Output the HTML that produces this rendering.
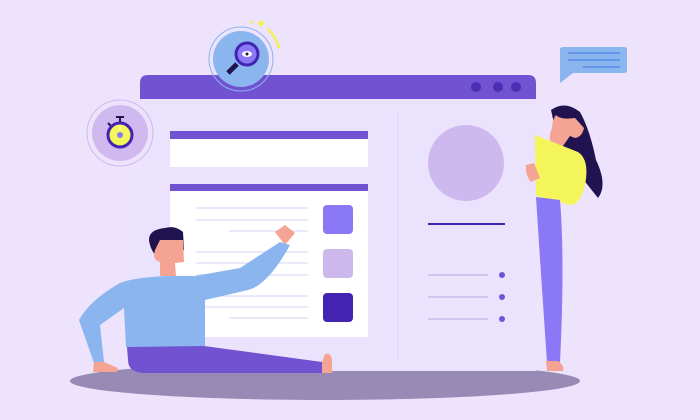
<!DOCTYPE html>
<html><head><style>html,body{margin:0;padding:0;background:#ede3fd;}svg{display:block}</style></head>
<body>
<svg width="700" height="420" viewBox="0 0 700 420" xmlns="http://www.w3.org/2000/svg">
<rect width="700" height="420" fill="#ede3fd"/>
<!-- shadow -->
<ellipse cx="325" cy="381" rx="255" ry="19" fill="#978bb5"/>
<!-- window -->
<rect x="140" y="99" width="396" height="272" fill="#ebe2fd"/>
<path d="M148 75 H528 Q536 75 536 83 V99 H140 V83 Q140 75 148 75Z" fill="#7152d0"/>
<circle cx="476" cy="87" r="5" fill="#4a2fb5"/><circle cx="498" cy="87" r="5" fill="#4a2fb5"/><circle cx="516" cy="87" r="5" fill="#4a2fb5"/>
<rect x="170" y="131" width="198" height="8" fill="#7152d0"/>
<rect x="170" y="139" width="198" height="28" fill="#fff"/>
<rect x="170" y="184" width="198" height="7" fill="#7152d0"/>
<rect x="170" y="191" width="198" height="146" fill="#fff"/>
<g stroke="#e6e0fa" stroke-width="1.5">
<line x1="196" y1="208" x2="308" y2="208"/><line x1="196" y1="220" x2="308" y2="220"/><line x1="229" y1="231" x2="308" y2="231"/>
<line x1="196" y1="252" x2="308" y2="252"/><line x1="196" y1="263" x2="308" y2="263"/><line x1="196" y1="275" x2="308" y2="275"/>
<line x1="196" y1="296" x2="308" y2="296"/><line x1="196" y1="307" x2="308" y2="307"/><line x1="229" y1="318" x2="308" y2="318"/>
</g>
<rect x="323" y="205" width="30" height="29" rx="4" fill="#8b78f6"/>
<rect x="323" y="249" width="30" height="29" rx="4" fill="#cdb8ec"/>
<rect x="323" y="293" width="30" height="29" rx="4" fill="#4324b2"/>
<line x1="398" y1="112" x2="398" y2="360" stroke="#ddd2f7" stroke-width="1"/>
<circle cx="466" cy="163" r="38" fill="#ceb9ee"/>
<line x1="428" y1="224" x2="505" y2="224" stroke="#4324b2" stroke-width="2"/>
<g stroke="#cdb8ec" stroke-width="1.5"><line x1="428" y1="275" x2="488" y2="275"/><line x1="428" y1="297" x2="488" y2="297"/><line x1="428" y1="319" x2="488" y2="319"/></g>
<g fill="#7152d0"><circle cx="502" cy="275" r="3"/><circle cx="502" cy="297" r="3"/><circle cx="502" cy="319" r="3"/></g>
<!-- magnifier badge -->
<circle cx="241" cy="59" r="32" fill="none" stroke="#8ab5ef" stroke-width="1"/>
<circle cx="241" cy="59" r="28" fill="#8ab5ef"/>
<path d="M268 29 Q276 37 279 48" stroke="#f3f05a" stroke-width="2.5" fill="none"/>
<path d="M261 19 l1.5 3 3 1.5 -3 1.5 -1.5 3 -1.5 -3 -3 -1.5 3 -1.5z" fill="#f3f05a"/>
<circle cx="252" cy="22" r="1.5" fill="#f3f05a"/>
<line x1="237" y1="64" x2="228" y2="73" stroke="#20134f" stroke-width="5"/>
<circle cx="247" cy="54" r="11" fill="#8b78f6" stroke="#4324b2" stroke-width="3"/>
<ellipse cx="247" cy="54" rx="5" ry="3" fill="#fff"/><circle cx="247" cy="54" r="1.5" fill="#20134f"/>
<!-- stopwatch -->
<circle cx="120" cy="133" r="33" fill="none" stroke="#cfb9ee" stroke-width="1"/>
<circle cx="120" cy="133" r="28" fill="#cfb9ee"/>
<rect x="116" y="116" width="8" height="2" fill="#20134f"/><rect x="119" y="117" width="2" height="5" fill="#20134f"/>
<line x1="108" y1="123" x2="112" y2="127" stroke="#20134f" stroke-width="2"/>
<circle cx="120" cy="135" r="12" fill="#f3f75a" stroke="#4324b2" stroke-width="3"/>
<circle cx="120" cy="135" r="3" fill="#8b78f6"/><line x1="120" y1="126" x2="120" y2="131" stroke="#fff" stroke-width="1"/>
<!-- speech bubble -->
<path d="M563 47 H624 Q627 47 627 50 V70 Q627 73 624 73 H573 L560 83 V50 Q560 47 563 47Z" fill="#8ab5ef"/>
<g stroke="#4a85e0" stroke-width="1.3"><line x1="568" y1="53" x2="620" y2="53"/><line x1="568" y1="60" x2="620" y2="60"/><line x1="583" y1="67" x2="620" y2="67"/></g>
<!-- woman -->
<path d="M551 110 Q565 100 580 112 Q590 130 596 160 Q608 185 598 198 L560 150Z" fill="#20134f"/>
<path d="M556 115 Q560 120 575 118 L584 128 Q582 137 575 138 L570 136 L560 150 Q545 145 552 128 Q552 120 556 115Z" fill="#f5a493"/>
<path d="M535 135 L578 152 Q590 160 585 185 Q580 205 570 205 Q555 200 536 196Z" fill="#f4f55a"/>
<path d="M526 165 L534 163 L540 178 L531 182 Q525 175 526 165Z" fill="#f5a493"/>
<path d="M536 197 L560 200 Q565 260 560 362 L547 362 Q540 260 536 197Z" fill="#8b78f6"/>
<path d="M546 361 L558 361 Q565 366 563 371 L547 371Z" fill="#f5a493"/>
<!-- man -->
<path d="M150 245 Q145 230 165 228 Q175 225 183 232 L184 250 L172 260 Q155 262 150 245Z" fill="#20134f"/>
<path d="M160 240 L183 240 L184 262 L175 263 L176 276 L160 276 L160 262 Q152 260 155 250Z" fill="#f5a493"/>
<path d="M275 232 L285 225 L295 233 L285 245Z" fill="#f5a493"/>
<path d="M280 242 L290 245 Q268 285 248 290 L205 300 L205 347 L126 347 L124 308 L100 325 L104 362 L94 363 L79 320 Q90 300 120 283 Q140 275 195 276 L240 268Z" fill="#8ab5ef"/>
<path d="M94 362 L104 362 L118 368 L117 372 L93 372Z" fill="#f5a493"/>
<path d="M127 347 L204 346 L322 362 L322 373 L143 373 Q128 372 128 360Z" fill="#7152d0"/>
<path d="M322 362 L325 354 Q331 352 332 360 L332 373 L322 373Z" fill="#f5a493"/>
</svg>
</body></html>
